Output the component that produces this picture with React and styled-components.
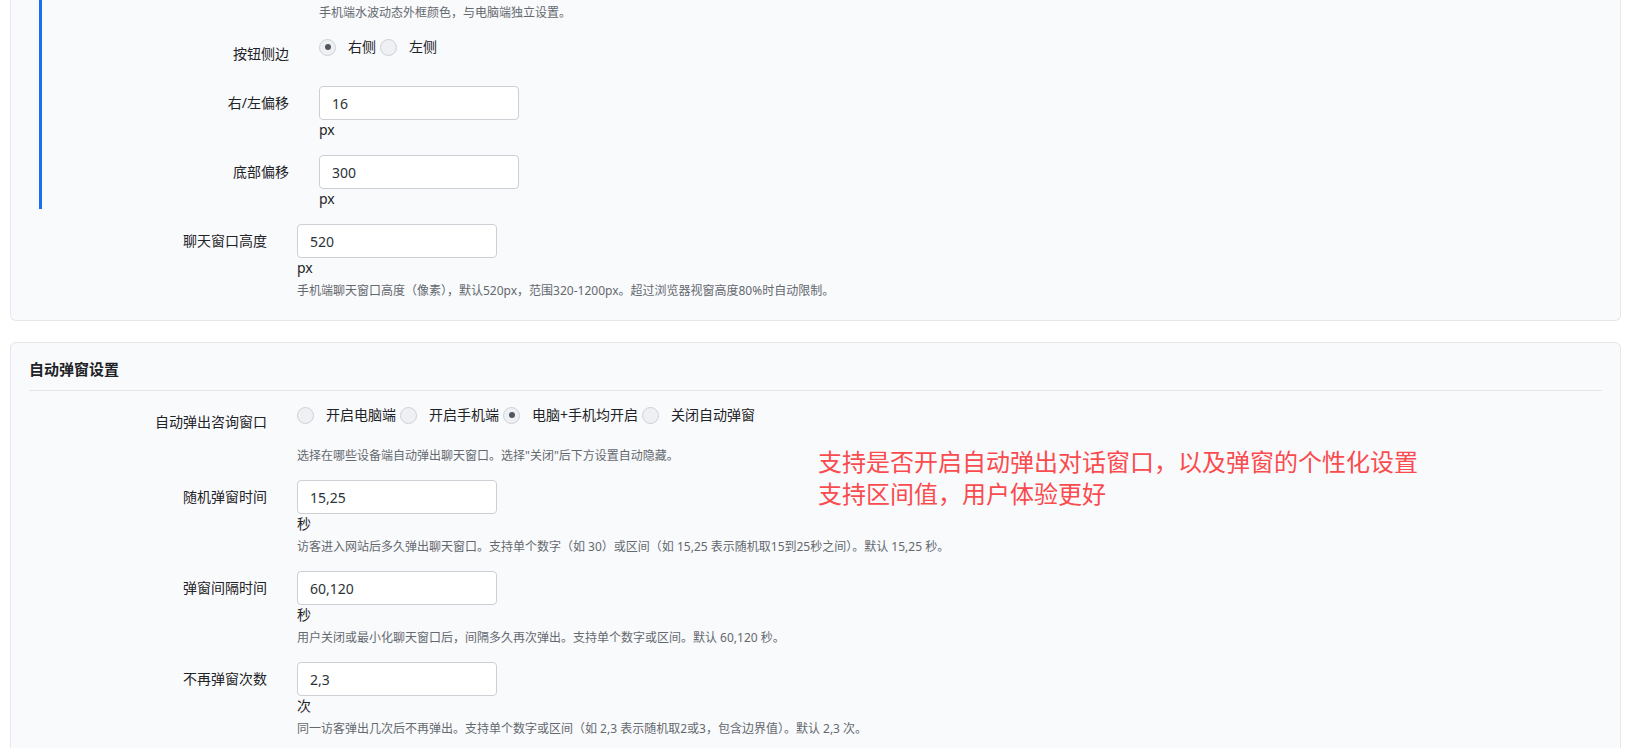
import styled, { createGlobalStyle } from 'styled-components';

const GlobalStyle = createGlobalStyle`
	body {
		margin: 0;
		background: #fff;
		font-family: 'Noto Sans', 'Noto Sans CJK SC', sans-serif;
		color: #1d2327;
	}
`;

const cardOne = {
	nested: [
		{ label: '按钮侧边', type: 'radio', options: ['右侧', '左侧'], checked: 0 },
		{ label: '右/左偏移', value: '16', suffix: 'px' },
		{ label: '底部偏移', value: '300', suffix: 'px' },
	],
	rows: [
		{
			label: '聊天窗口高度',
			value: '520',
			suffix: 'px',
			help: '手机端聊天窗口高度（像素），默认520px，范围320-1200px。超过浏览器视窗高度80%时自动限制。',
		},
	],
};

const popupRows = [
	{
		label: '自动弹出咨询窗口',
		type: 'radio',
		options: ['开启电脑端', '开启手机端', '电脑+手机均开启', '关闭自动弹窗'],
		checked: 2,
		help: '选择在哪些设备端自动弹出聊天窗口。选择"关闭"后下方设置自动隐藏。',
	},
	{
		label: '随机弹窗时间',
		value: '15,25',
		suffix: '秒',
		help: '访客进入网站后多久弹出聊天窗口。支持单个数字（如 30）或区间（如 15,25 表示随机取15到25秒之间）。默认 15,25 秒。',
	},
	{
		label: '弹窗间隔时间',
		value: '60,120',
		suffix: '秒',
		help: '用户关闭或最小化聊天窗口后，间隔多久再次弹出。支持单个数字或区间。默认 60,120 秒。',
	},
	{
		label: '不再弹窗次数',
		value: '2,3',
		suffix: '次',
		help: '同一访客弹出几次后不再弹出。支持单个数字或区间（如 2,3 表示随机取2或3，包含边界值）。默认 2,3 次。',
	},
];

function Field({ row }) {
	return (
		<Row>
			<Label>{row.label}</Label>
			<div>
				{row.type === 'radio' ? (
					<RadioGroup>
						{row.options.map((opt, i) => (
							<RadioOption key={opt}>
								<RadioDot $checked={i === row.checked} />
								{opt}
							</RadioOption>
						))}
					</RadioGroup>
				) : (
					<>
						<TextInput defaultValue={row.value} />
						<Suffix>{row.suffix}</Suffix>
					</>
				)}
				{row.help && <Help>{row.help}</Help>}
			</div>
		</Row>
	);
}

function App() {
	return (
		<>
			<GlobalStyle />
			<Page>
				<Card $cut>
					<Fields>
						<SubGroup>
							<Fields>
								<Row>
									<div />
									<Help>手机端水波动态外框颜色，与电脑端独立设置。</Help>
								</Row>
								{cardOne.nested.map((row) => (
									<Field key={row.label} row={row} />
								))}
							</Fields>
						</SubGroup>
						{cardOne.rows.map((row) => (
							<Field key={row.label} row={row} />
						))}
					</Fields>
				</Card>

				<Card>
					<CardTitle>自动弹窗设置</CardTitle>
					<Fields $top>
						{popupRows.map((row) => (
							<Field key={row.label} row={row} />
						))}
					</Fields>
					<Note>
						支持是否开启自动弹出对话窗口，以及弹窗的个性化设置
						<br />
						支持区间值，用户体验更好
					</Note>
				</Card>
			</Page>
		</>
	);
}

export default App;

const Page = styled.div`
	display: flex;
	flex-direction: column;
	gap: 21px;
	padding: 0 14px 0 10px;
`;

const Card = styled.section`
	position: relative;
	background: #f9fafb;
	border: 1px solid #e5e7eb;
	border-radius: 6px;
	padding: 15px 18px 20px;
	${(p) =>
		p.$cut &&
		`
		border-top: none;
		border-radius: 0 0 6px 6px;
		padding-top: 0;
	`}
`;

const CardTitle = styled.h2`
	margin: 0;
	font-size: 15px;
	font-weight: 700;
	line-height: 22px;
	padding-bottom: 10px;
	border-bottom: 1px solid #e3e6ea;
`;

const Fields = styled.div`
	display: flex;
	flex-direction: column;
	gap: 15px;
	margin-top: ${(p) => (p.$top ? '14px' : '0')};
`;

const SubGroup = styled.div`
	margin-left: 10px;
	padding-left: 9px;
	border-left: 3px solid #1b6ef3;
`;

const Row = styled.div`
	display: grid;
	grid-template-columns: 238px 1fr;
	column-gap: 30px;
`;

const Label = styled.div`
	text-align: right;
	font-size: 14px;
	line-height: 20px;
	padding: 7px 0;
`;

const TextInput = styled.input`
	display: block;
	box-sizing: border-box;
	width: 200px;
	height: 34px;
	padding: 0 12px;
	border: 1px solid #ccd0d4;
	border-radius: 4px;
	background: #fff;
	font-family: inherit;
	font-size: 14px;
	color: #2c3338;
	outline: none;
`;

const Suffix = styled.div`
	font-size: 14px;
	line-height: 20px;
`;

const RadioGroup = styled.div`
	display: flex;
	align-items: center;
	height: 20px;
`;

const RadioOption = styled.label`
	display: flex;
	align-items: center;
	margin-right: 4px;
	font-size: 14px;
	line-height: 20px;
`;

const RadioDot = styled.span`
	box-sizing: border-box;
	width: 17px;
	height: 17px;
	margin-right: 12px;
	border-radius: 50%;
	border: 1px solid #cdd0d5;
	background: #eef0f3;
	display: flex;
	align-items: center;
	justify-content: center;

	&::after {
		content: '';
		width: 6px;
		height: 6px;
		border-radius: 50%;
		background: #50575e;
		display: ${(p) => (p.$checked ? 'block' : 'none')};
	}
`;

const Help = styled.p`
	margin: 4px 0 0;
	font-size: 12px;
	line-height: 18px;
	color: #646970;

	${RadioGroup} + & {
		margin-top: 22px;
	}
`;

const Note = styled.div`
	position: absolute;
	top: 103px;
	left: 807px;
	font-size: 24px;
	line-height: 32px;
	color: #fa4b4f;
	white-space: nowrap;
`;
